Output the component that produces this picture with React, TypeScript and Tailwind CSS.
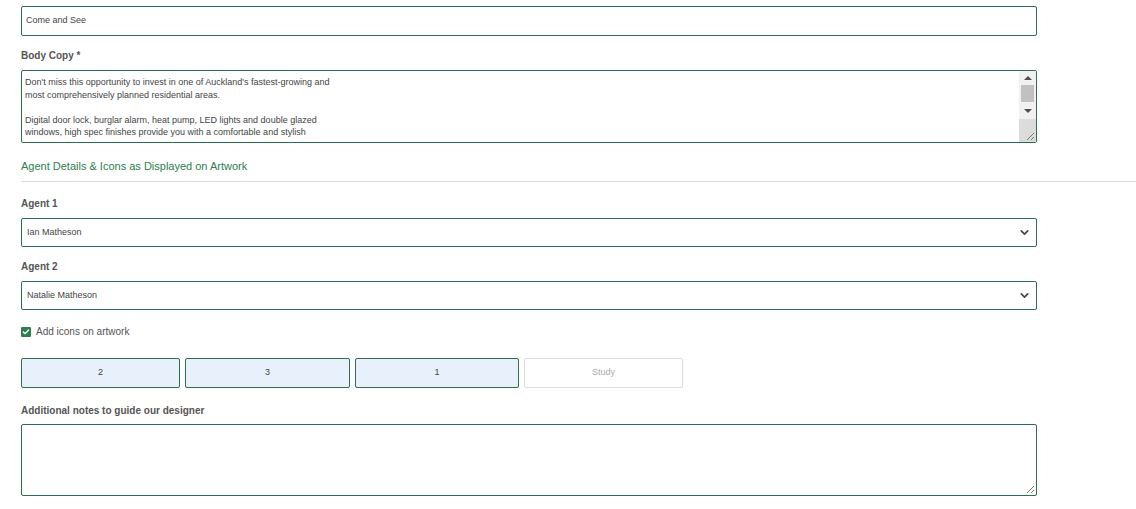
import { ChevronDown, Check } from "lucide-react";

const font = { fontFamily: '"Liberation Sans", Arial, sans-serif' };

function Label({ children }: { children: React.ReactNode }) {
  return <div className="text-[10px] font-bold text-[#555] leading-none">{children}</div>;
}

function Select({ value }: { value: string }) {
  return (
    <div className="h-[29px] w-[1016px] border border-[#2e6e4e] rounded-[2px] bg-white flex items-center justify-between pl-[5px] pr-[5px]">
      <span className="text-[9px] text-[#444]">{value}</span>
      <ChevronDown size={13} strokeWidth={3} className="text-[#444]" />
    </div>
  );
}

const pills = [
  { label: "2", w: "w-[159px]", on: true },
  { label: "3", w: "w-[165px]", on: true },
  { label: "1", w: "w-[164px]", on: true },
  { label: "Study", w: "w-[159px]", on: false },
];

export default function App() {
  return (
    <div className="w-[1136px] h-[509px] bg-white overflow-hidden" style={font}>
      <div className="pt-[6px] pl-[21px]">
        <div className="h-[30px] w-[1016px] border border-[#2e6e4e] rounded-[2px] flex items-center pl-[4px]">
          <span className="text-[9px] text-[#444]">Come and See</span>
        </div>

        <div className="mt-[15px]">
          <Label>Body Copy *</Label>
        </div>

        <div className="relative mt-[9px] h-[73px] w-[1016px] border border-[#2e6e4e] rounded-[2px] overflow-hidden">
          <div className="pl-[3px] pt-[5px] text-[9px] leading-[12.5px] text-[#444]">
            <div>Don't miss this opportunity to invest in one of Auckland's fastest-growing and</div>
            <div>most comprehensively planned residential areas.</div>
            <div>&nbsp;</div>
            <div>Digital door lock, burglar alarm, heat pump, LED lights and double glazed</div>
            <div>windows, high spec finishes provide you with a comfortable and stylish</div>
          </div>
          {/* fake native scrollbar */}
          <div className="absolute right-0 top-0 bottom-0 w-[17px] bg-[#f1f1f1] flex flex-col">
            <div className="h-[14px] flex items-center justify-center">
              <div className="w-0 h-0 border-l-[4px] border-r-[4px] border-b-[4px] border-l-transparent border-r-transparent border-b-[#505050]" />
            </div>
            <div className="mx-[2px] h-[17px] bg-[#c1c1c1]" />
            <div className="h-[17px] flex items-center justify-center">
              <div className="w-0 h-0 border-l-[4px] border-r-[4px] border-t-[4px] border-l-transparent border-r-transparent border-t-[#505050]" />
            </div>
            <div className="flex-1 bg-[#dcdcdc] relative">
              <svg className="absolute right-[1px] bottom-[1px]" width="9" height="9" viewBox="0 0 9 9">
                <line x1="8" y1="1" x2="1" y2="8" stroke="#777" strokeWidth="1" />
                <line x1="8" y1="5" x2="5" y2="8" stroke="#777" strokeWidth="1" />
              </svg>
            </div>
          </div>
        </div>

        <div className="mt-[18px] text-[11px] text-[#2e7d4f] leading-none">
          Agent Details &amp; Icons as Displayed on Artwork
        </div>
      </div>

      <div className="ml-[21px] mt-[9px] h-px bg-[#dcdcdc]" />

      <div className="pl-[21px]">
        <div className="mt-[17px]">
          <Label>Agent 1</Label>
        </div>
        <div className="mt-[9px]">
          <Select value="Ian Matheson" />
        </div>
        <div className="mt-[15px]">
          <Label>Agent 2</Label>
        </div>
        <div className="mt-[9px]">
          <Select value="Natalie Matheson" />
        </div>

        <div className="mt-[15px] flex items-center gap-[5px] h-[13px]">
          <div className="w-[10px] h-[10px] bg-[#2e7d4f] rounded-[1px] flex items-center justify-center">
            <Check size={8} strokeWidth={4} className="text-white" />
          </div>
          <span className="text-[10px] leading-none text-[#555]">Add icons on artwork</span>
        </div>

        <div className="mt-[20px] flex gap-[5px]">
          {pills.map((p) => (
            <div
              key={p.label}
              className={`${p.w} h-[30px] rounded-[2px] flex items-center justify-center text-[9px] ${
                p.on
                  ? "bg-[#e8f0fb] border border-[#2e6e4e] text-[#444]"
                  : "bg-white border border-[#dddddd] text-[#aaa]"
              }`}
            >
              {p.label}
            </div>
          ))}
        </div>

        <div className="mt-[18px]">
          <Label>Additional notes to guide our designer</Label>
        </div>

        <div className="relative mt-[8px] h-[72px] w-[1016px] border border-[#2e6e4e] rounded-[2px]">
          <svg className="absolute right-[1px] bottom-[1px]" width="9" height="9" viewBox="0 0 9 9">
            <line x1="8" y1="1" x2="1" y2="8" stroke="#777" strokeWidth="1" />
            <line x1="8" y1="5" x2="5" y2="8" stroke="#777" strokeWidth="1" />
          </svg>
        </div>
      </div>
    </div>
  );
}
